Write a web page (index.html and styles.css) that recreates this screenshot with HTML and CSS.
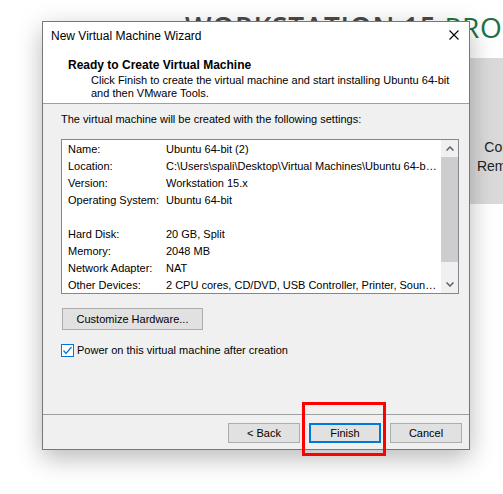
FILE: index.html
```html
<!DOCTYPE html>
<html lang="en">
<head>
    <meta charset="UTF-8">
    <meta name="viewport" content="width=device-width, initial-scale=1.0">
    <title>New Virtual Machine Wizard</title>
    <link rel="stylesheet" href="styles.css">
</head>
<body>
    <div class="home">
        <h1 class="brand"><span class="brand-name">WORKSTATION 15</span> <span class="brand-pro">PRO</span></h1>
        <div class="tiles">
            <div class="tile">Connect to a<br>Remote Server</div>
        </div>
    </div>

    <div class="wizard">
        <div class="titlebar">
            <span class="title">New Virtual Machine Wizard</span>
            <svg class="close" width="10" height="10" viewBox="0 0 10 10">
                <path d="M0.5 0.5L9.5 9.5M9.5 0.5L0.5 9.5" stroke="#000" stroke-width="1.1" fill="none"/>
            </svg>
        </div>

        <div class="wizard-header">
            <div class="step-title">Ready to Create Virtual Machine</div>
            <div class="step-desc">Click Finish to create the virtual machine and start installing Ubuntu 64-bit<br>and then VMware Tools.</div>
        </div>

        <div class="wizard-body">
            <p class="intro">The virtual machine will be created with the following settings:</p>

            <div class="summary">
                <div class="summary-list">
                    <div class="row"><span class="key">Name:</span><span class="val">Ubuntu 64-bit (2)</span></div>
                    <div class="row"><span class="key">Location:</span><span class="val">C:\Users\spali\Desktop\Virtual Machines\Ubuntu 64-bit (2)</span></div>
                    <div class="row"><span class="key">Version:</span><span class="val">Workstation 15.x</span></div>
                    <div class="row"><span class="key">Operating System:</span><span class="val">Ubuntu 64-bit</span></div>
                    <div class="row"></div>
                    <div class="row"><span class="key">Hard Disk:</span><span class="val">20 GB, Split</span></div>
                    <div class="row"><span class="key">Memory:</span><span class="val">2048 MB</span></div>
                    <div class="row"><span class="key">Network Adapter:</span><span class="val">NAT</span></div>
                    <div class="row"><span class="key">Other Devices:</span><span class="val">2 CPU cores, CD/DVD, USB Controller, Printer, Sound Card, Display</span></div>
                </div>
                <div class="scrollbar">
                    <div class="arrow">
                        <svg width="8" height="5" viewBox="0 0 8 5"><path d="M0.5 4.5L4 1L7.5 4.5" stroke="#606060" stroke-width="1.5" fill="none"/></svg>
                    </div>
                    <div class="track"><div class="thumb"></div></div>
                    <div class="arrow">
                        <svg width="8" height="5" viewBox="0 0 8 5"><path d="M0.5 0.5L4 4L7.5 0.5" stroke="#606060" stroke-width="1.5" fill="none"/></svg>
                    </div>
                </div>
            </div>

            <button class="btn btn-wide">Customize Hardware...</button>

            <label class="check">
                <span class="box">
                    <svg width="11" height="11" viewBox="0 0 11 11"><path d="M1.5 5.5L4 8.5L9.5 2" stroke="#0078d7" stroke-width="1.2" fill="none"/></svg>
                </span>
                Power on this virtual machine after creation
            </label>
        </div>

        <div class="wizard-footer">
            <button class="btn">&lt; Back</button>
            <button class="btn btn-default">Finish</button>
            <button class="btn">Cancel</button>
        </div>
    </div>

    <div class="highlight"></div>
</body>
</html>
```

FILE: styles.css
```css
body {
    margin: 0;
    width: 503px;
    height: 494px;
    overflow: hidden;
    position: relative;
    background-color: #fff;
    font-family: "Liberation Sans", Arial, sans-serif;
    font-size: 11px;
    color: #000;
}

/* app home screen behind the dialog */
.home {
    padding-top: 11px;
}

.brand {
    margin: 0 0 0 185px;
    font-family: "Open Sans", sans-serif;
    font-size: 28px;
    line-height: 32px;
    font-weight: 600;
    letter-spacing: 0.7px;
    white-space: nowrap;
    color: #4a4a4a;
}

.brand-pro {
    font-weight: 400;
    color: #1f7043;
}

.tiles {
    margin: 15px 0 0 420px;
    width: 208px;
}

.tile {
    height: 146px;
    box-sizing: border-box;
    padding-top: 80px;
    background-color: #dadada;
    text-align: center;
    font-size: 14px;
    line-height: 19px;
    color: #222;
}

/* wizard window */
.wizard {
    position: absolute;
    left: 42px;
    top: 21px;
    width: 428px;
    height: 429px;
    box-sizing: border-box;
    border: 1px solid #777;
    background-color: #f0f0f0;
    box-shadow: 0 8px 24px rgba(0, 0, 0, 0.28);
    display: flex;
    flex-direction: column;
}

.titlebar {
    height: 27px;
    flex-shrink: 0;
    background-color: #fff;
    display: flex;
    align-items: center;
    justify-content: space-between;
    padding: 0 10px 0 8px;
    font-size: 12px;
}

.close {
    display: block;
    margin-top: -1px;
}

.wizard-header {
    height: 55px;
    flex-shrink: 0;
    box-sizing: border-box;
    background-color: #fff;
    border-bottom: 1px solid #a0a0a0;
    padding: 9px 0 0 25px;
}

.step-title {
    font-weight: bold;
    font-size: 12px;
    line-height: 15px;
}

.step-desc {
    margin-top: 1px;
    padding-left: 23px;
    line-height: 13px;
}

.wizard-body {
    flex: 1;
    padding: 9px 0 0 18px;
}

.intro {
    margin: 0 0 13px;
    line-height: 13px;
}

.summary {
    width: 398px;
    height: 155px;
    box-sizing: border-box;
    border: 1px solid #828790;
    background-color: #fff;
    display: flex;
}

.summary-list {
    flex: 1;
    min-width: 0;
    overflow: hidden;
    padding: 1px 3px 0 6px;
}

.row {
    display: flex;
    height: 17px;
    line-height: 17px;
    white-space: nowrap;
}

.key {
    width: 98px;
    flex-shrink: 0;
}

.val {
    flex: 1;
    min-width: 0;
    overflow: hidden;
    text-overflow: ellipsis;
}

.scrollbar {
    width: 17px;
    flex-shrink: 0;
    background-color: #f0f0f0;
    display: flex;
    flex-direction: column;
}

.arrow {
    height: 17px;
    display: flex;
    align-items: center;
    justify-content: center;
}

.arrow svg {
    display: block;
}

.track {
    flex: 1;
}

.thumb {
    height: 105px;
    background-color: #cdcdcd;
}

.btn {
    height: 20px;
    box-sizing: border-box;
    padding: 0;
    border: 1px solid #adadad;
    background-color: #e1e1e1;
    font-family: inherit;
    font-size: 11px;
    color: #000;
}

.btn-wide {
    display: block;
    width: 141px;
    height: 22px;
    margin: 14px 0 0 1px;
}

.check {
    display: flex;
    align-items: center;
    margin-top: 14px;
    line-height: 13px;
}

.box {
    width: 13px;
    height: 13px;
    box-sizing: border-box;
    margin-right: 3px;
    border: 1px solid #0078d7;
    background-color: #fff;
}

.box svg {
    display: block;
}

.wizard-footer {
    height: 35px;
    flex-shrink: 0;
    box-sizing: border-box;
    border-top: 1px solid #a0a0a0;
    display: flex;
    justify-content: flex-end;
    gap: 9px;
    padding: 8px 7px 0 0;
}

.wizard-footer .btn {
    width: 72px;
}

.btn-default {
    border: 2px solid #0078d7;
}

/* red callout round the Finish button */
.highlight {
    position: absolute;
    left: 302px;
    top: 402px;
    width: 84px;
    height: 54px;
    box-sizing: border-box;
    border: 3px solid #f00;
}
```
